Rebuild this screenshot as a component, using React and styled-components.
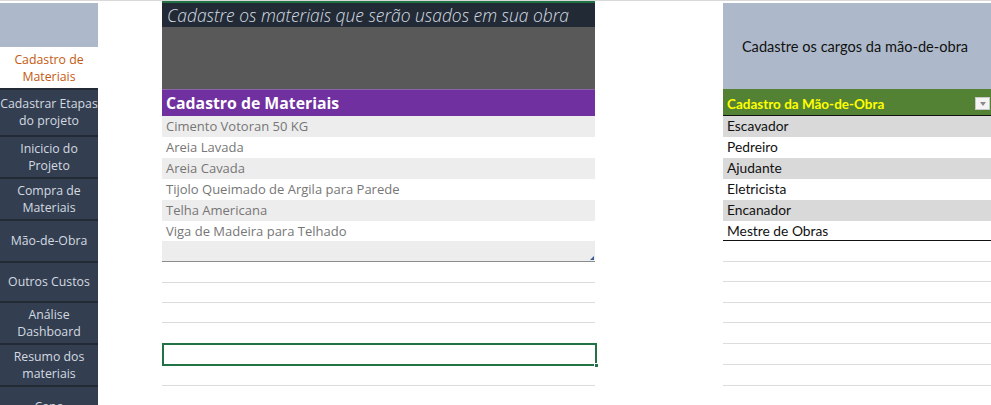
import React from "react";
import styled, { createGlobalStyle } from "styled-components";

const Global = createGlobalStyle`
  html, body { margin: 0; padding: 0; background: #ffffff; overflow: hidden; }
  * { box-sizing: border-box; }
`;

const Page = styled.div`
  display: flex;
  align-items: flex-start;
  width: 991px;
  height: 405px;
  overflow: hidden;
  border-top: 1px solid #d9d9d9;
  background: #ffffff;
`;

const Cap = styled.div`
  height: 2px;
  background: ${(p) => p.$color || "#ffffff"};
`;

/* ---------- Sidebar ---------- */
const Sidebar = styled.nav`
  width: 98px;
  flex: none;
  display: flex;
  flex-direction: column;
  font-family: "Open Sans", "Noto Sans", sans-serif;
  font-size: 12.3px;
  line-height: 17px;
`;

const SideTop = styled.div`
  height: 44px;
  background: #adb9ca;
`;

const NavItem = styled.div`
  height: ${(p) => p.$h}px;
  flex: none;
  display: flex;
  align-items: center;
  justify-content: center;
  text-align: center;
  white-space: pre-line;
  background: ${(p) => (p.$active ? "#ffffff" : "#333f50")};
  color: ${(p) => (p.$active ? "#c55a11" : "#d3d9e1")};
  border-top: ${(p) => (p.$active ? "none" : "2px solid #222a35")};
  padding-bottom: ${(p) => (p.$active ? "0" : "1px")};
`;

/* ---------- Materials ---------- */
const Materials = styled.section`
  margin-left: 64px;
  width: 433px;
  flex: none;
  font-family: "Open Sans", "Noto Sans", sans-serif;
`;

const DarkBand = styled.div`
  height: 24px;
  background: #222b35;
  color: #d6dce4;
  font-style: italic;
  font-weight: 300;
  font-size: 17.4px;
  line-height: 25px;
  padding-left: 5px;
  white-space: nowrap;
  overflow: hidden;
`;

const GreyBand = styled.div`
  height: 62px;
  background: #595959;
`;

const PurpleHeader = styled.div`
  height: 27px;
  background: #7030a0;
  color: #ffffff;
  font-weight: 700;
  font-size: 15.8px;
  line-height: 26px;
  padding-left: 4px;
  border-top: 1px solid #8a63a8;
`;

const MatRow = styled.div`
  position: relative;
  height: ${(p) => p.$h}px;
  background: ${(p) => (p.$shade ? "#ededed" : "#ffffff")};
  color: #767676;
  font-size: 13px;
  line-height: ${(p) => p.$h}px;
  padding-left: 4px;
  border-bottom: ${(p) => (p.$last ? "1px solid #8c8c8c" : "none")};
`;

const ResizeMark = styled.span`
  position: absolute;
  right: 1px;
  bottom: 1px;
  width: 0;
  height: 0;
  border-left: 4px solid transparent;
  border-bottom: 4px solid #3b5a9a;
`;

const GridRow = styled.div`
  height: ${(p) => p.$h}px;
  border-bottom: 1px solid ${(p) => (p.$noLine ? "transparent" : "#dcdcdc")};
`;

const SelectedCell = styled.div`
  position: relative;
  height: 23px;
  width: 435px;
  border: 2px solid #217346;
`;

const Handle = styled.span`
  position: absolute;
  right: -4px;
  bottom: -4px;
  width: 5px;
  height: 5px;
  background: #217346;
  border: 1px solid #ffffff;
`;

/* ---------- Labour ---------- */
const Labour = styled.section`
  margin-left: 128px;
  flex: 1;
  font-family: Lato, "Noto Sans", sans-serif;
`;

const LabourTop = styled.div`
  height: 86px;
  background: #adb9ca;
  color: #111111;
  font-size: 14.6px;
  display: flex;
  align-items: center;
  justify-content: center;
  padding-top: 1px;
  padding-right: 4px;
`;

const GreenHeader = styled.div`
  position: relative;
  height: 27px;
  background: #548235;
  color: #ffff00;
  font-weight: 700;
  font-size: 13.5px;
  line-height: 31px;
  padding-left: 4px;
  border-bottom: 1px solid #111111;
`;

const DropButton = styled.span`
  position: absolute;
  right: 1px;
  top: 8px;
  width: 15px;
  height: 13px;
  background: #f4f4f4;
  border: 1px solid #c8c8c8;
  display: flex;
  align-items: center;
  justify-content: center;
  &::after {
    content: "";
    border-left: 3px solid transparent;
    border-right: 3px solid transparent;
    border-top: 4px solid #8a8a8a;
  }
`;

const LabRow = styled.div`
  position: relative;
  height: ${(p) => p.$h}px;
  background: ${(p) => (p.$shade ? "#d9d9d9" : "#ffffff")};
  color: #111111;
  font-size: 13.8px;
  line-height: ${(p) => p.$h - 1}px;
  padding-left: 4px;
  border-bottom: ${(p) => (p.$last ? "1.5px solid #111111" : "none")};
`;

const navItems = [
  { label: "Cadastrar Etapas\ndo projeto", h: 47 },
  { label: "Inicicio do\nProjeto", h: 42 },
  { label: "Compra de\nMateriais", h: 42 },
  { label: "Mão-de-Obra", h: 42 },
  { label: "Outros Custos", h: 40 },
  { label: "Análise\nDashboard", h: 42 },
  { label: "Resumo dos\nmateriais", h: 42 },
  { label: "Capa", h: 42 },
];

const materials = [
  "Cimento Votoran 50 KG",
  "Areia Lavada",
  "Areia Cavada",
  "Tijolo Queimado de Argila para Parede",
  "Telha Americana",
  "Viga de Madeira para Telhado",
];

const roles = ["Escavador", "Pedreiro", "Ajudante", "Eletricista", "Encanador", "Mestre de Obras"];

const labourGrid = [21, 20, 21, 20, 21, 21, 21];

export default function App() {
  return (
    <>
      <Global />
      <Page>
        <Sidebar>
          <Cap />
          <SideTop />
          <NavItem $active $h={41}>{"Cadastro de\nMateriais"}</NavItem>
          {navItems.map((n) => (
            <NavItem key={n.label} $h={n.h}>
              {n.label}
            </NavItem>
          ))}
        </Sidebar>

        <Materials>
          <Cap $color="#217346" />
          <DarkBand>Cadastre os materiais que serão usados em sua obra</DarkBand>
          <GreyBand />
          <PurpleHeader>Cadastro de Materiais</PurpleHeader>
          {materials.map((m, i) => (
            <MatRow key={m} $shade={i % 2 === 0} $h={i < 5 ? 21 : 20}>
              {m}
            </MatRow>
          ))}
          <MatRow $shade $last $h={21}>
            <ResizeMark />
          </MatRow>
          <GridRow $h={21} />
          <GridRow $h={20} />
          <GridRow $h={20} />
          <GridRow $h={20} $noLine />
          <SelectedCell>
            <Handle />
          </SelectedCell>
          <GridRow $h={20} />
        </Materials>

        <Labour>
          <Cap />
          <LabourTop>Cadastre os cargos da mão-de-obra</LabourTop>
          <GreenHeader>
            Cadastro da Mão-de-Obra
            <DropButton />
          </GreenHeader>
          {roles.map((r, i) => (
            <LabRow key={r} $shade={i % 2 === 0} $h={i < 5 ? 21 : 20} $last={i === roles.length - 1}>
              {r}
            </LabRow>
          ))}
          {labourGrid.map((h, k) => (
            <GridRow key={k} $h={h} />
          ))}
        </Labour>
      </Page>
    </>
  );
}
